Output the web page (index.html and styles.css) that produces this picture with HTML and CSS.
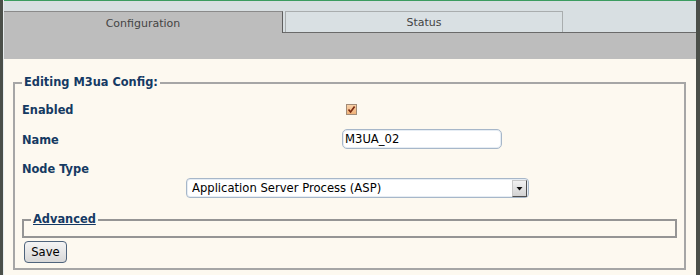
FILE: index.html
```html
<!DOCTYPE html>
<html>
<head>
<meta charset="utf-8">
<link rel="stylesheet" href="styles.css">
</head>
<body>
<div class="frame">
  <div class="tabs">
    <div class="tab active">Configuration</div>
    <div class="tab">Status</div>
  </div>
  <div class="band"></div>
  <div class="content">
    <fieldset class="main">
      <legend>Editing M3ua Config:</legend>
      <div class="row r1">
        <span class="label">Enabled</span>
        <span class="checkbox"><svg width="9" height="9" viewBox="0 0 9 9"><path d="M1.5 4.5 L3.6 7 L7.6 1.6" fill="none" stroke="#7a2a10" stroke-width="1.7"/></svg></span>
      </div>
      <div class="row r2">
        <span class="label">Name</span>
        <input class="text" type="text" value="M3UA_02">
      </div>
      <div class="row r3">
        <span class="label">Node Type</span>
      </div>
      <div class="selrow">
        <div class="select">
          <select><option>Application Server Process (ASP)</option></select>
          <span class="arrow"><svg width="7" height="5" viewBox="0 0 7 5"><path d="M0.5 1 H6.5 L3.5 4.5 Z" fill="#111"/></svg></span>
        </div>
      </div>
      <fieldset class="adv">
        <legend><a href="#">Advanced</a></legend>
      </fieldset>
      <button class="save">Save</button>
    </fieldset>
  </div>
</div>
</body>
</html>
```
FILE: styles.css
```css
html, body {
  margin: 0;
  padding: 0;
  background: #4b4f49;
  height: 275px;
  overflow: hidden;
}
.frame {
  margin-left: 3px;
  width: 692px;
  height: 275px;
  border-left: 1px solid #e6ecee;
  background: #fdf9f0;
  font-family: "DejaVu Sans", Verdana, sans-serif;
}
.tabs {
  background: #d8dfe2;
  border-top: 1px solid #3c9c60;
  border-bottom: 1px solid #6a6a6a;
  display: flex;
  align-items: flex-end;
  box-sizing: content-box;
  height: 31px;
}
.tab {
  box-sizing: border-box;
  height: 21px;
  width: 278px;
  margin-left: 2px;
  font-size: 11px;
  color: #444;
  display: flex;
  align-items: center;
  justify-content: center;
  border: 1px solid #a9adae;
  border-bottom: none;
  background: #d9e0e3;
}
.tab.active {
  margin-left: 0;
  width: 279px;
  height: 22px;
  margin-bottom: -1px;
  background: #bdbdbd;
  border: none;
  border-top: 1px solid #8a8a8a;
  border-right: 1px solid #5e5e5e;
  padding-top: 1px;
}
.band {
  height: 26px;
  background: #bdbdbd;
}
.content {
  padding: 17px 10px 0 9px;
}
fieldset {
  margin: 0;
  min-width: 0;
}
legend {
  font-size: 11.4px;
  line-height: 13px;
  font-weight: bold;
  color: #153a64;
  padding: 0 2px;
}
.main {
  border: 2px solid #a6a6a6;
  padding: 0 7px 5px 7px;
}
.row {
  display: flex;
  align-items: center;
  height: 20px;
}
.r1 { margin-top: 10px; }
.r2 { margin-top: 10px; }
.r3 { margin-top: 9px; }
.label {
  width: 320px;
  flex: none;
  padding-top: 2px;
  font-size: 11.4px;
  font-weight: bold;
  color: #153a62;
}
.checkbox {
  margin-left: 4px;
  width: 11px;
  height: 11px;
  box-sizing: border-box;
  border: 1px solid #a28c78;
  background: linear-gradient(#f9d2a8, #f0b27a);
  display: flex;
  align-items: center;
  justify-content: center;
}
.checkbox svg { display: block; }
.text {
  box-sizing: border-box;
  width: 160px;
  height: 20px;
  border: 1px solid #a7b7c9;
  border-radius: 5px;
  padding: 0 2px;
  margin: 0;
  font-family: "DejaVu Sans", Verdana, sans-serif;
  font-size: 11.6px;
  color: #000;
  background: #fff;
  box-shadow: inset 0 0 0 1px #e6edf4;
  outline: none;
}
.selrow {
  height: 20px;
  padding-left: 164px;
}
.select {
  box-sizing: border-box;
  width: 343px;
  height: 20px;
  border: 1px solid #a7b7c9;
  border-radius: 4px;
  background: #fff;
  display: flex;
  align-items: center;
  box-shadow: inset 0 0 0 1px #e6edf4;
}
.select select {
  appearance: none;
  -webkit-appearance: none;
  border: none;
  background: transparent;
  flex: 1;
  height: 18px;
  padding: 0 0 0 5px;
  margin: 0;
  font-family: "DejaVu Sans", Verdana, sans-serif;
  font-size: 11.6px;
  color: #000;
  outline: none;
}
.arrow {
  box-sizing: border-box;
  width: 15px;
  height: 17px;
  margin-right: 1px;
  border: 1px solid #c8c8c8;
  border-right-color: #505050;
  border-bottom-color: #505050;
  background: linear-gradient(#f2f2f2, #d2d2d2);
  display: flex;
  align-items: center;
  justify-content: center;
}
.arrow svg { display: block; }
.adv {
  margin-top: 15px;
  border: 2px solid #959595;
  padding: 0 7px 10px 7px;
}
.adv legend a {
  color: #153a64;
  text-decoration: underline;
}
.save {
  display: block;
  margin: 3px 0 0 2px;
  box-sizing: border-box;
  width: 43px;
  height: 22px;
  padding: 0;
  border: 1px solid #4f647c;
  border-radius: 4px;
  background: linear-gradient(#f4f4f4, #d8d8d8);
  font-family: "DejaVu Sans", Verdana, sans-serif;
  font-size: 11.6px;
  color: #000;
}
```
